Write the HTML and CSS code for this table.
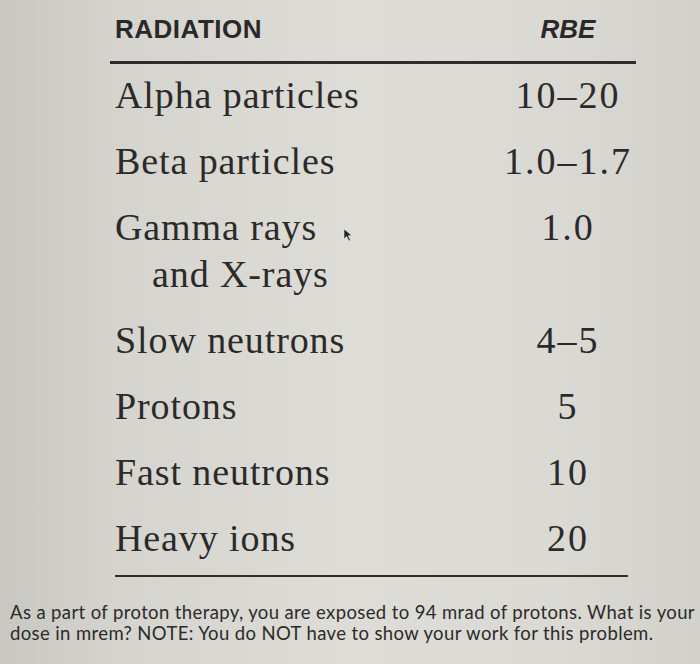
FILE: index.html
```html
<!DOCTYPE html>
<html>
<head>
<meta charset="utf-8">
<link rel="stylesheet" href="styles.css">
</head>
<body>
<div class="page">
  <div class="table">
    <div class="head">
      <span class="h-label">Radiation</span>
      <span class="h-value">RBE</span>
    </div>
    <div class="rows">
      <div class="row"><div class="label">Alpha particles</div><div class="value">10–20</div></div>
      <div class="row"><div class="label">Beta particles</div><div class="value">1.0–1.7</div></div>
      <div class="row"><div class="label">Gamma rays<span class="cursor"><svg width="12" height="14" viewBox="0 0 12 14"><path d="M1 1 L1 11 L3.5 8.5 L6 13 L7.5 12.2 L5.2 7.8 L9 7.6 Z" fill="#222" stroke="#eee" stroke-width="0.6"/></svg></span><br><span class="indent">and X-rays</span></div><div class="value">1.0</div></div>
      <div class="row"><div class="label">Slow neutrons</div><div class="value">4–5</div></div>
      <div class="row"><div class="label">Protons</div><div class="value">5</div></div>
      <div class="row"><div class="label">Fast neutrons</div><div class="value">10</div></div>
      <div class="row"><div class="label">Heavy ions</div><div class="value">20</div></div>
    </div>
    <div class="rule-bottom"></div>
  </div>
  <p class="question">As a part of proton therapy, you are exposed to 94 mrad of protons. What is your<br>dose in mrem? NOTE: You do NOT have to show your work for this problem.</p>
</div>
</body>
</html>
```
FILE: styles.css
```css
html, body {
  margin: 0;
  padding: 0;
}
body {
  width: 700px;
  height: 664px;
  overflow: hidden;
  background: linear-gradient(90deg, #c9c7c1 0%, #d6d4cf 18%, #dddcd7 50%, #dad9d4 80%, #d2d1cc 100%);
  color: #2b2a28;
}
.page {
  height: 664px;
  display: flex;
  flex-direction: column;
}
.table {
  margin-left: 110px;
  width: 526px;
  padding-top: 14px;
}
.head {
  display: flex;
  align-items: baseline;
  font-family: "Liberation Sans", Arial, sans-serif;
  font-weight: bold;
  font-size: 26px;
  line-height: 30px;
  text-transform: uppercase;
  padding-left: 5px;
  padding-bottom: 17px;
  border-bottom: 3px solid #2e2d2b;
  color: #2a2927;
}
.h-label {
  flex: 1;
  letter-spacing: 0.5px;
}
.h-value {
  width: 136px;
  text-align: center;
  font-style: italic;
}
.rows {
  display: flex;
  flex-direction: column;
  gap: 21px;
  padding-top: 9px;
  padding-left: 5px;
}
.row {
  display: flex;
  font-family: "Liberation Serif", "Times New Roman", serif;
  font-size: 38px;
  line-height: 45px;
}
.label {
  flex: 1;
  letter-spacing: 0.9px;
}
.indent {
  padding-left: 37px;
}
.cursor {
  display: inline-block;
  margin-left: 26px;
  vertical-align: -2px;
}
.value {
  width: 136px;
  text-align: center;
  letter-spacing: 2px;
  padding-left: 2px;
}
.rule-bottom {
  margin-top: 14px;
  margin-left: 5px;
  width: 513px;
  height: 2px;
  background: #2e2d2b;
}
.question {
  margin: 25px 0 0 10px;
  font-family: Lato, "Open Sans", sans-serif;
  font-size: 18.5px;
  line-height: 21px;
  letter-spacing: 0.38px;
  white-space: nowrap;
  color: #2c2b29;
}
```
